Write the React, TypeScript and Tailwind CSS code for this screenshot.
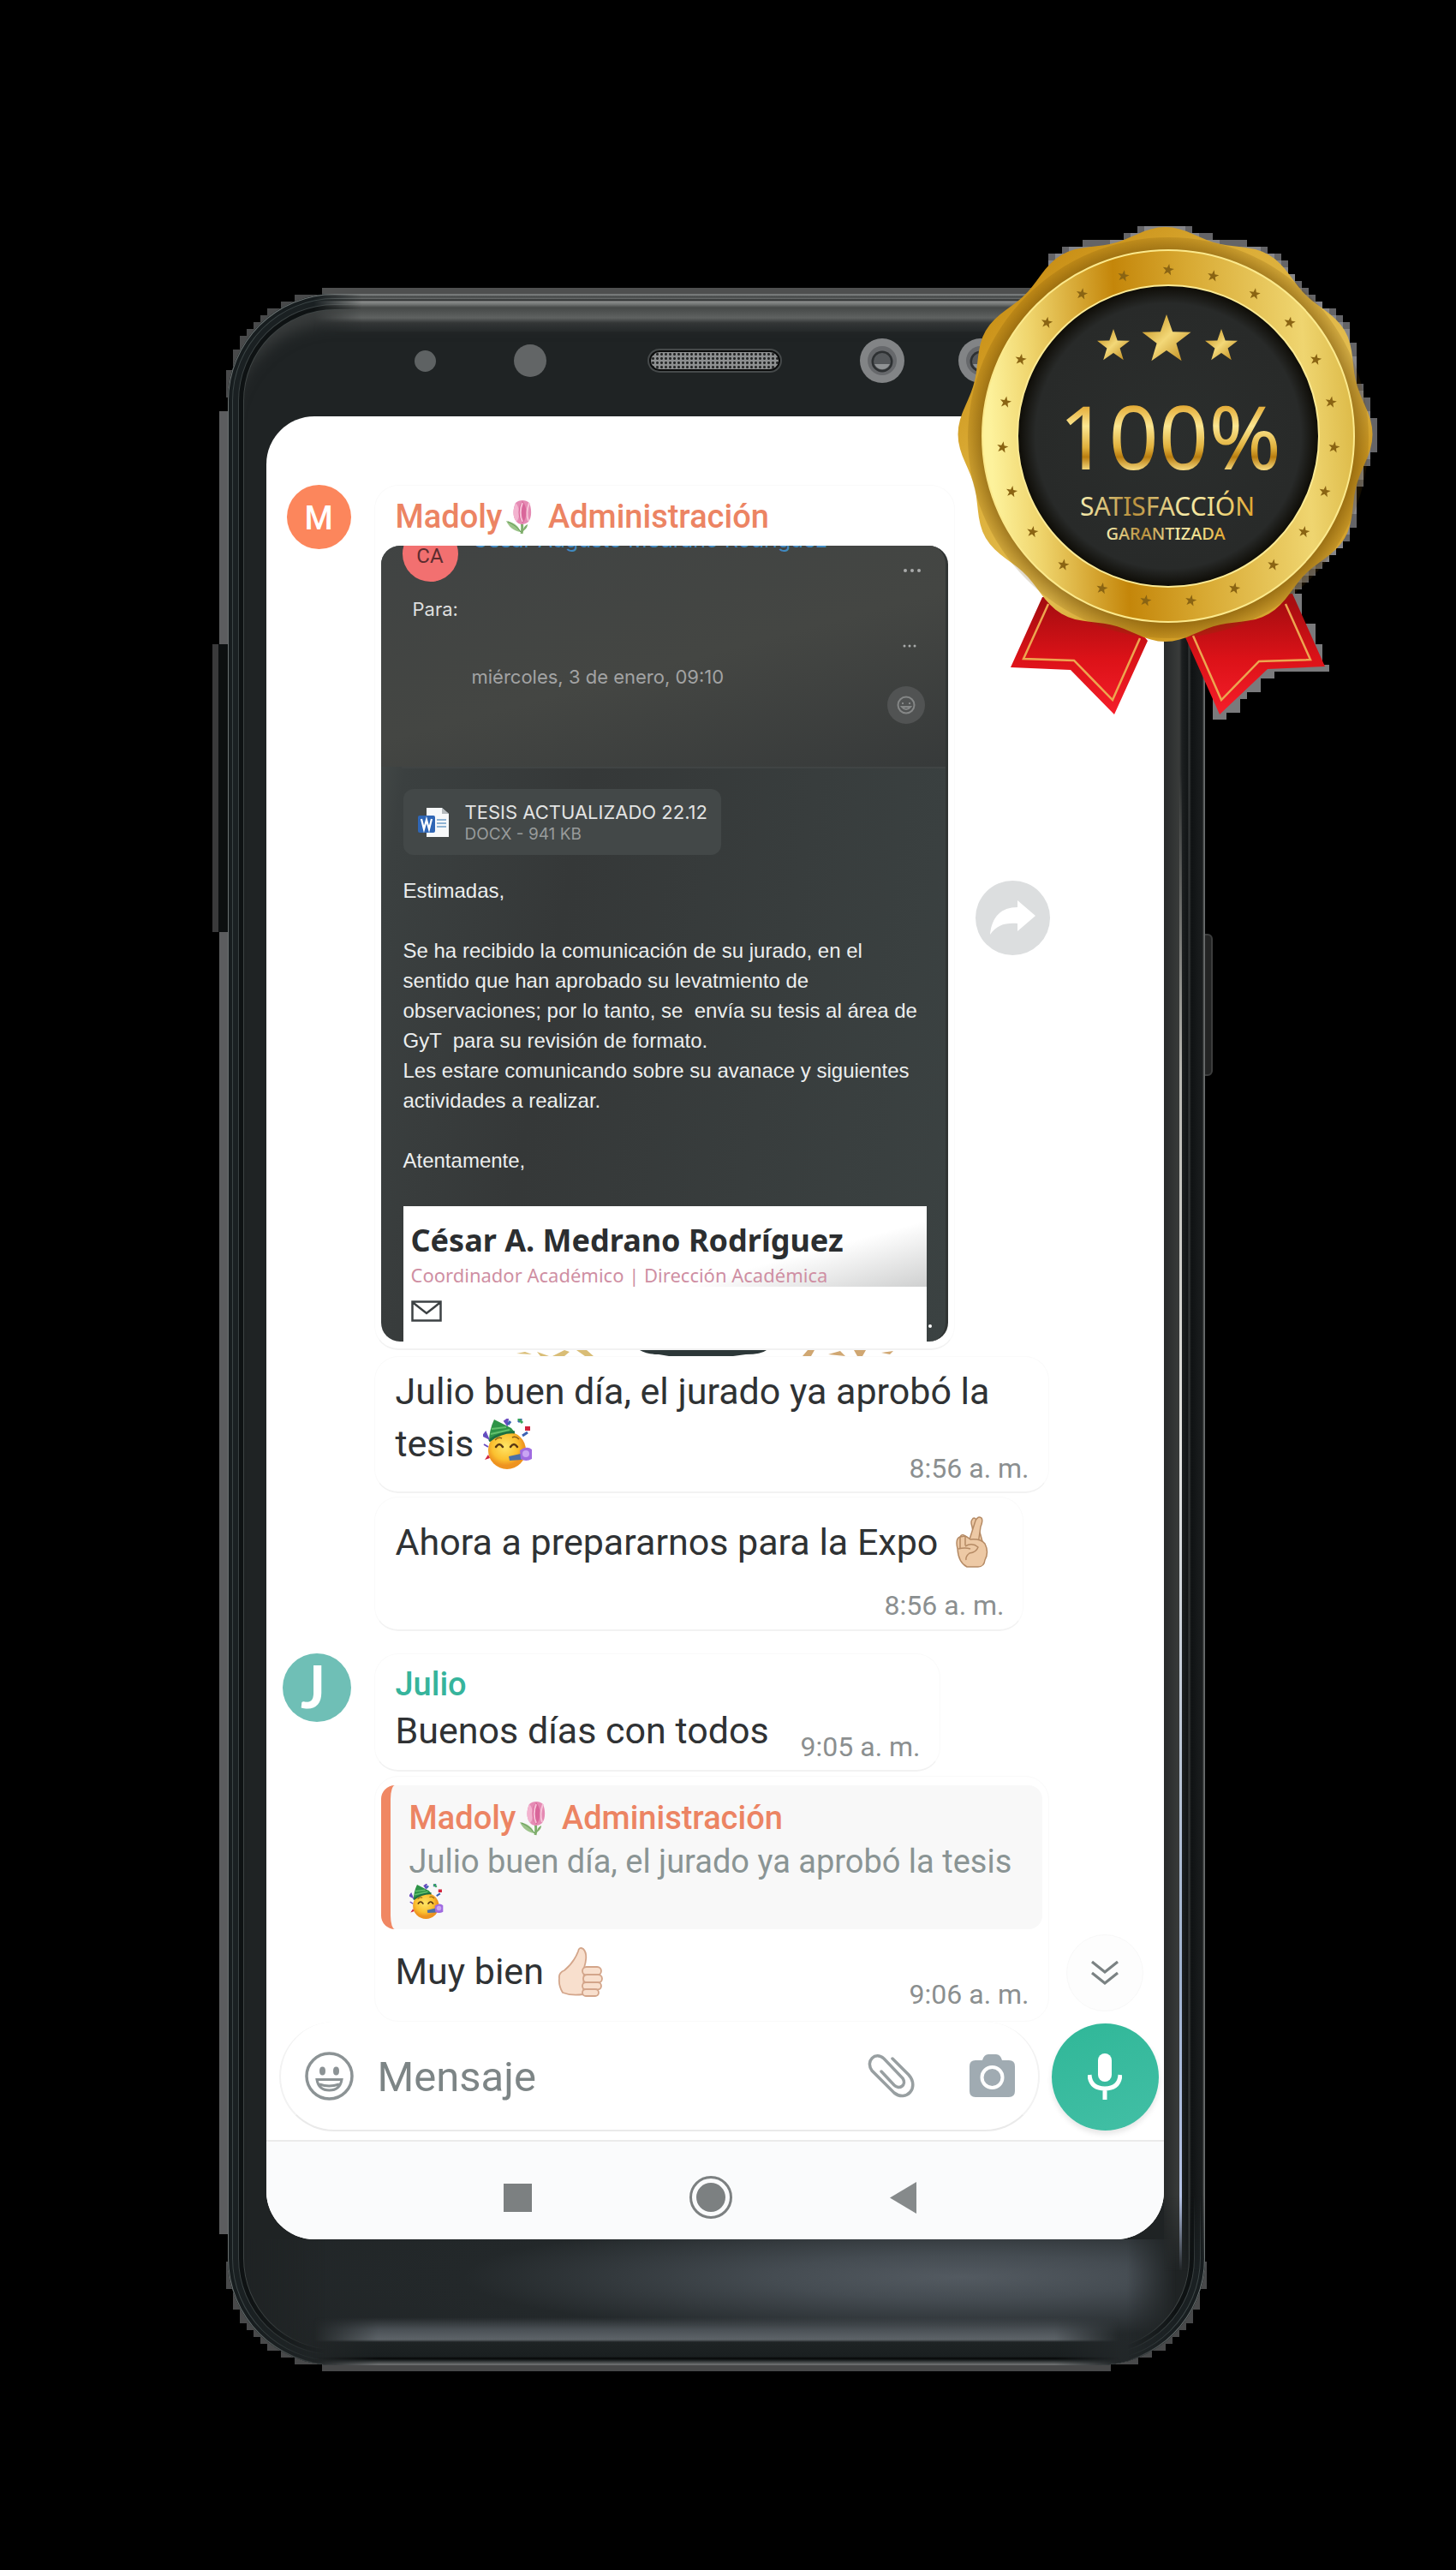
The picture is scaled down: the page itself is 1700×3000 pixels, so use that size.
import React from "react";

const starPoints = (cx: number, cy: number, r: number, rot = 0) =>
  Array.from({ length: 10 }, (_, i) => {
    const a = ((i * 36 - 90 + rot) * Math.PI) / 180;
    const q = i % 2 ? r * 0.4 : r;
    return `${(cx + q * Math.cos(a)).toFixed(1)},${(cy + q * Math.sin(a)).toFixed(1)}`;
  }).join(" ");

const SEAL = { x: 1360.5, y: 507 };

const sealPath =
  "M" +
  Array.from({ length: 180 }, (_, i) => {
    const a = (i * 2 * Math.PI) / 180;
    const r = 236.5 + 5.5 * Math.cos(12 * a);
    return `${(SEAL.x + r * Math.cos(a)).toFixed(1)} ${(SEAL.y + r * Math.sin(a)).toFixed(1)}`;
  }).join("L") +
  "Z";

/* 8px blocks that peek out along the right edge of the seal */
const sealBlocks: { x: number; y: number; o: number }[] = [];
for (let y = 264; y < 720; y += 8) {
  for (let x = 1224; x < 1616; x += 8) {
    const dx = x + 4 - SEAL.x;
    const dy = y + 4 - SEAL.y;
    const d = Math.hypot(dx, dy);
    const a = Math.atan2(dy, dx);
    const edge = 236.5 + 5.5 * Math.cos(12 * a);
    if (d > edge - 10 && d < edge + 5) sealBlocks.push({ x, y, o: d > edge + 1 ? 0.75 : 1 });
  }
}

function Seal() {
  return (
    <svg
      className="pointer-events-none absolute -top-[88px] -right-[213px] h-[590px] w-[510px]"
      viewBox="1110 255 510 590"
      role="img"
      aria-label="100% satisfacción garantizada"
    >
      <defs>
        <linearGradient id="outer" gradientUnits="userSpaceOnUse" x1="1200" y1="300" x2="1530" y2="710">
          <stop offset="0" stopColor="#c78c12" />
          <stop offset=".3" stopColor="#dcae38" />
          <stop offset=".62" stopColor="#e3bd50" />
          <stop offset=".82" stopColor="#cf9a22" />
          <stop offset="1" stopColor="#d9aa36" />
        </linearGradient>
        <linearGradient id="ring" x1="0" x2="1" y1=".05" y2="0">
          <stop offset="0" stopColor="#fdf29c" />
          <stop offset=".12" stopColor="#efd46c" />
          <stop offset=".35" stopColor="#c4860a" />
          <stop offset=".55" stopColor="#d8a932" />
          <stop offset=".85" stopColor="#efd570" />
          <stop offset="1" stopColor="#dab642" />
        </linearGradient>
        <radialGradient id="face">
          <stop offset="0" stopColor="#2b2e2d" />
          <stop offset=".88" stopColor="#282a29" />
          <stop offset="1" stopColor="#0d0b05" />
        </radialGradient>
        <radialGradient id="ringShade" gradientUnits="userSpaceOnUse" cx="1364" cy="511" r="242">
          <stop offset=".88" stopColor="#6a4500" stopOpacity=".6" />
          <stop offset="1" stopColor="#6a4500" stopOpacity="0" />
        </radialGradient>
        <linearGradient id="goldDown" x1="0" x2="0" y1="0" y2="1">
          <stop offset=".2" stopColor="#dc9a1c" />
          <stop offset=".42" stopColor="#fbe691" />
          <stop offset=".6" stopColor="#e0b03c" />
          <stop offset=".68" stopColor="#b97d10" />
          <stop offset=".8" stopColor="#fbe28a" />
        </linearGradient>
        <linearGradient id="goldAcross">
          <stop offset="0" stopColor="#f7efb0" />
          <stop offset=".3" stopColor="#b98f3a" />
          <stop offset=".6" stopColor="#f5eba8" />
          <stop offset=".8" stopColor="#f0dc86" />
          <stop offset="1" stopColor="#e2a52a" />
        </linearGradient>
        <linearGradient id="goldStar" x2="1" y2="1">
          <stop offset=".1" stopColor="#c79422" />
          <stop offset=".5" stopColor="#f3d878" />
          <stop offset="1" stopColor="#b98212" />
        </linearGradient>
        <linearGradient id="red" gradientUnits="userSpaceOnUse" x1="1360" y1="705" x2="1360" y2="834">
          <stop offset="0" stopColor="#a80d10" />
          <stop offset=".5" stopColor="#dc1218" />
          <stop offset="1" stopColor="#f51e2a" />
        </linearGradient>
      </defs>
      {sealBlocks.map((b) => (
        <rect key={`${b.x}-${b.y}`} x={b.x} y={b.y} width="8" height="8" fill="#86868a" opacity={b.x < 1340 && b.y > 336 ? 0 : b.o} />
      ))}
      <path d="M1509 693H1520V728H1536V752H1544V776H1552V784H1488V792H1472V808H1456V816H1448V832H1432V840H1416V816Z" fill="#7a7a7c" />
      <path d="M1217 697L1180 779L1250 782L1301 834L1340 748L1300 700Z" fill="url(#red)" />
      <path d="M1224 705L1195 769L1254 771L1299 817L1331 745" fill="none" stroke="#eda550" strokeWidth="2.5" />
      <path d="M1509 693L1547 778L1480 781L1424 834L1384 744L1420 700Z" fill="url(#red)" />
      <path d="M1501 705L1530 770L1470 772L1426 817L1393 742" fill="none" stroke="#eda550" strokeWidth="2.5" />
      <path d={sealPath} fill="url(#outer)" />
      <circle cx="1364" cy="511" r="234" fill="url(#ringShade)" />
      <circle cx="1364" cy="509" r="217" fill="url(#ring)" stroke="#fbe98c" strokeWidth="2" />
      <circle cx="1364" cy="509" r="176" fill="url(#face)" stroke="#fbea94" strokeWidth="2" />
      {Array.from({ length: 23 }, (_, i) => {
        const a = (i * 2 * Math.PI) / 23;
        return (
          <polygon
            key={i}
            points={starPoints(1364 + 194 * Math.sin(a), 509 - 194 * Math.cos(a), 7, 10)}
            fill="#8a6413"
          />
        );
      })}
      <polygon points={starPoints(1300, 404, 20)} fill="url(#goldStar)" />
      <polygon points={starPoints(1362, 397, 30)} fill="url(#goldStar)" />
      <polygon points={starPoints(1426, 404, 20)} fill="url(#goldStar)" />
      <g textAnchor="middle" fontFamily="'Noto Sans', sans-serif">
        <text x="1366" y="548" fontSize="102" fill="url(#goldDown)">100%</text>
        <text x="1363" y="602" fontSize="30" fill="url(#goldAcross)">SATISFACCIÓN</text>
        <text x="1361" y="630" fontSize="20" fontWeight="500" fill="url(#goldAcross)">GARANTIZADA</text>
      </g>
    </svg>
  );
}

/* stepped outline behind a rounded corner of the handset */
function StepCorner({ className }: { className: string }) {
  const cells: React.ReactNode[] = [];
  for (let y = 0; y < 128; y += 8) {
    for (let x = 0; x < 128; x += 8) {
      if (Math.hypot(127 - (x + 8), 132 - (y + 8)) < 124) {
        cells.push(<rect key={`${x}-${y}`} x={x} y={y} width="8" height="8" />);
      }
    }
  }
  return (
    <svg className={`absolute size-32 fill-[#48494a] ${className}`} viewBox="0 0 128 128" aria-hidden="true">
      {cells}
    </svg>
  );
}

function Tulip() {
  return (
    <svg className="mr-2 ml-1 inline-block h-10 w-8 align-[-8px]" viewBox="0 0 32 40" role="img" aria-label="🌷">
      <path d="M19 24C20 30 20 35 19 39" fill="none" stroke="#7fae6c" strokeWidth="3" />
      <path d="M1 24C7 25 15 28 18 37C10 36 4 31 1 24Z" fill="#9cc389" />
      <path d="M3 25C9 28 14 31 18 37" fill="none" stroke="#5f9a52" />
      <path d="M22 35C25 33 26 30 26 28C23 29 21 32 20 37Z" fill="#7fae6c" />
      <path d="M12 3C16 -1 24 -1 28 3C31 10 31 20 27 25C23 29 16 29 13 25C8 19 9 9 12 3Z" fill="#e58bb4" />
      <path d="M12 3C9 11 8 19 13 25C17 21 18 9 12 3Z" fill="#f3b3cf" />
      <path d="M20 1C14 8 14 20 20 27C26 20 26 8 20 1Z" fill="#d9669a" />
      <path d="M20 3C17 10 17 19 20 25" fill="none" stroke="#f5bfd6" strokeWidth="2" />
      <path d="M28 3C25 11 25 19 27 24" fill="none" stroke="#f6c3d8" strokeWidth="2" />
    </svg>
  );
}

function PartyFace({ className }: { className: string }) {
  return (
    <svg className={`inline-block ${className}`} viewBox="0 0 58 60" role="img" aria-label="🥳">
      <defs>
        <radialGradient id="skin" cx=".45" cy=".4">
          <stop offset="0" stopColor="#ffe667" />
          <stop offset=".7" stopColor="#fbc02f" />
          <stop offset="1" stopColor="#ee9320" />
        </radialGradient>
      </defs>
      <circle cx="28" cy="37" r="22" fill="url(#skin)" />
      <path d="M7 27C12 21 26 14 37 16L33 11L13 1C9 9 7 18 7 27Z" fill="#2e9447" />
      <path d="M7 26C14 20 26 15 37 16" fill="none" stroke="#1d6f42" strokeWidth="3" />
      <path d="M10 12L27 10M9 18L31 13" stroke="#63c06d" strokeWidth="2" />
      <path d="M15 33Q19 27 23 33M32 33Q36 27 40 33" fill="none" stroke="#5b3913" strokeWidth="2.5" strokeLinecap="round" />
      <path d="M14 25Q18 21 22 23M34 22Q38 20 42 24" fill="none" stroke="#8b5e17" strokeWidth="1.5" />
      <path d="M30 44L44 41L45 48L31 49Z" fill="#4b6fa6" />
      <path d="M43 37Q51 31 57 36V47Q50 51 44 47Z" fill="#a06be0" />
      <circle cx="50" cy="41" r="4" fill="#c9a5f3" />
      <path d="M25 3L29 0L28 7ZM3 16L0 20L6 23ZM1 30L6 33" fill="#3a66b8" stroke="#6b4cc0" strokeWidth="2" />
      <path d="M49 9H55V14H49ZM2 48L8 46L6 42Z" fill="#d2233c" />
      <path d="M46 20L52 16M41 4L45 0M29 7L32 3" stroke="#3d63b4" strokeWidth="3" />
      <path d="M41 0L46 5" stroke="#37a35b" strokeWidth="3" />
    </svg>
  );
}

function CrossedFingers() {
  return (
    <svg className="ml-5 inline-block h-[60px] w-10 align-[-15px]" viewBox="0 0 40 60" role="img" aria-label="🤞🏼">
      <g fill="#edc9a5" stroke="#b58a64" strokeWidth="1.5" strokeLinejoin="round">
        <path d="M33 33L25 4Q22 0 20 4Q18 6 20 12L24 34Z" />
        <path d="M16 30L24 5Q27 -1 31 2Q33 5 30 12L27 32Z" />
        <path d="M3 38Q0 26 6 24L12 23Q16 25 18 27Q30 26 35 32Q40 42 35 51Q34 59 27 59H14Q4 54 3 38Z" />
        <path d="M6 24Q8 20 12 23V34M6 24V37" fill="none" />
        <path d="M12 35Q20 30 27 36Q25 42 17 43Q12 47 13 51M4 38Q12 36 18 38" fill="none" />
      </g>
    </svg>
  );
}

function ThumbsUp() {
  return (
    <svg className="ml-4 inline-block h-[58px] w-[53px] align-[-15px]" viewBox="0 0 53 58" role="img" aria-label="👍🏻">
      <g fill="#f8dfcd" stroke="#d3a58a" strokeWidth="1.8" strokeLinejoin="round">
        <path d="M2 36Q1 30 8 27Q19 18 24 5Q25 -1 30 2Q36 8 31 24L30 55Q16 57 6 53Q1 45 2 36Z" />
        <rect x="29" y="23" width="22" height="9.500" rx="4.700" />
        <rect x="30" y="32" width="22" height="9.500" rx="4.700" />
        <rect x="29" y="41" width="22" height="8.500" rx="4.200" />
        <rect x="29" y="49" width="19" height="8" rx="4" />
      </g>
    </svg>
  );
}

function Time({ children }: { children: string }) {
  return <time className="block text-[32px] leading-10 whitespace-nowrap text-[#8b8f90]">{children}</time>;
}

const bubble = "rounded-[28px] border border-b-2 border-[#fafafa] border-b-[#f2f2f2] bg-white";
const message = "text-[43px] leading-[61px] text-[#2f3234]";

function Dots({ className }: { className: string }) {
  return (
    <span className={`flex ${className}`} aria-hidden="true">
      <i className="size-1 rounded-full bg-[#a9abab]" />
      <i className="size-1 rounded-full bg-[#a9abab]" />
      <i className="size-1 rounded-full bg-[#a9abab]" />
    </span>
  );
}

function MailShot() {
  return (
    <section className="relative mr-[7px] ml-[7px] overflow-hidden rounded-[22px] border-r-[3px] border-[#303433] bg-[linear-gradient(100deg,#4c524f_0%,#3b4040_9%,#353838_35%,#3b4242_100%)]">
      <div className="bg-[linear-gradient(165deg,#404343_0%,#444643_55%,#373a3a_100%)]">
        <div className="-mt-[23px] flex items-start pr-[29px] pl-[25px]">
          <div className="flex size-[65px] shrink-0 items-center justify-center rounded-full bg-[#f27070] pt-1 text-2xl text-[#5d2c2f]">CA</div>
          <p className="ml-[17px] flex-1 font-['Inter',sans-serif] text-[25px] leading-8 whitespace-nowrap text-[#4089c0]">
            César Augusto Medrano Rodríguez
          </p>
          <Dots className="mt-[50px] gap-1" />
        </div>
        <p className="mt-[18px] pl-[37px] font-['Inter',sans-serif] text-[22px] leading-7 text-[#dedfdf]">Para:</p>
        <div className="mt-[27px] flex justify-end pr-8"><Dots className="scale-75 gap-1" /></div>
        <div className="mt-[20px] flex h-[69px] items-start justify-between pr-6 pl-[106px]">
          <p className="font-['Inter',sans-serif] text-[22px] leading-7 text-[#a2a3a3]">miércoles, 3 de enero, 09:10</p>
          <button className="flex size-11 items-center justify-center self-end rounded-full bg-[#515353]" aria-label="Reaccionar">
            <svg className="size-[22px] fill-none stroke-[#858787]" viewBox="0 0 22 22" strokeWidth="2">
              <circle cx="11" cy="11" r="9.500" />
              <path d="M7 8V10M15 8V10M6 13Q11 19 16 13Z" />
            </svg>
          </button>
        </div>
        <div className="h-[50px]" />
      </div>
      <hr className="ml-6 border-t-2 border-[#404444]" />
      <div className="mt-6 ml-[26px] flex h-[77px] w-fit items-center rounded-xl bg-[#434848] pr-4 pl-[17px]">
        <svg className="h-9 w-9" viewBox="0 0 36 36" aria-hidden="true">
          <path d="M10 1H28L36 8V35H10Z" fill="#f7f9fa" />
          <path d="M28 1V8H36Z" fill="#b4babd" />
          <path d="M22 15H33M22 19H33M22 23H33" stroke="#8fb4d4" strokeWidth="2" />
          <rect x="0" y="10" width="20" height="20" rx="2" fill="#2f66b5" />
          <path d="M4 14L7 26L10 15L13 26L16 14" fill="none" stroke="#fff" strokeWidth="2.200" />
        </svg>
        <div className="ml-[19px] font-['Inter',sans-serif]">
          <p className="text-[22px] leading-7 text-[#e2e3e3]">TESIS ACTUALIZADO 22.12</p>
          <p className="text-[19px] leading-6 text-[#989b9b]">DOCX - 941 KB</p>
        </div>
      </div>
      <div className="mt-6 ml-[26px] font-['Liberation_Sans',Arial,sans-serif] text-[24px] leading-[35px] whitespace-pre text-[#eceeee]">
        <p>Estimadas,</p>
        <p className="mt-[35px]">Se ha recibido la comunicación de su jurado, en el</p>
        <p>sentido que han aprobado su levatmiento de</p>
        <p>observaciones; por lo tanto, se  envía su tesis al área de</p>
        <p>GyT  para su revisión de formato.</p>
        <p>Les estare comunicando sobre su avanace y siguientes</p>
        <p>actividades a realizar.</p>
        <p className="mt-[35px]">Atentamente,</p>
      </div>
      <div className="mt-9 mr-[22px] ml-[26px] bg-white">
        <div className="bg-[linear-gradient(345deg,#cfd0d0_0%,#ffffff_30%)] pt-[18px] pb-0 pl-[9px] font-['Noto_Sans',sans-serif]">
          <p className="text-[36px] leading-11 font-bold whitespace-nowrap text-[#2b2e30]">César A. Medrano Rodríguez</p>
          <p className="mt-1 text-[22px] leading-7 whitespace-nowrap text-[#cf8fa3]">Coordinador Académico | Dirección Académica</p>
        </div>
        <div className="h-16 pt-4 pl-[9px]">
          <svg className="h-[25px] w-9 fill-none stroke-[#3d4244]" viewBox="0 0 36 25" strokeWidth="2.500">
            <path d="M1.500 1.500H34.500V23.500H1.500ZM1.500 2L18 15L34.500 2" />
          </svg>
        </div>
      </div>
      <i className="absolute right-4 bottom-4 size-1 rounded-full bg-white" />
    </section>
  );
}

function Conversation() {
  return (
    <main className="flex flex-col items-start pt-20">
      <div className="flex w-full items-center">
        <div className="flex w-[126px] shrink-0 self-start pl-6">
          <div className="flex size-[75px] items-center justify-center rounded-full bg-[#fc865c] pt-1 text-[38px] font-medium text-white">M</div>
        </div>
        <article className={`w-[678px] pt-[14px] pb-2 ${bubble}`}>
          <h2 className="mb-3 pl-6 text-[38px] leading-11 font-medium whitespace-nowrap text-[#ec8463]">
            Madoly<Tulip /> Administración
          </h2>
          <MailShot />
        </article>
        <button className="ml-6 flex size-[87px] shrink-0 items-center justify-center rounded-full bg-[#dcdedf]" aria-label="Reenviar">
          <svg className="h-10 w-[54px] fill-white" viewBox="0 0 54 40">
            <path d="M1 40C3 19 14 8 33 8V0L54 18L33 36V27C18 26 9 29 1 40Z" />
          </svg>
        </button>
      </div>

      <svg className="ml-[290px] h-[7px] w-[460px]" viewBox="0 0 460 7" aria-hidden="true">
        <path d="M146 0H294Q288 5 270 5L255 7H180L168 5Q154 5 146 0Z" fill="#2c3738" />
        <path d="M2 4L12 2L20 5ZM26 2L40 7H30ZM44 7L58 0L64 2L58 7ZM72 0H84L92 7H82Z" fill="#d9bd76" />
        <path d="M336 7L342 0H350L346 7ZM366 5L380 1L386 7ZM396 0H410L406 7H400ZM428 3L442 1L438 5Z" fill="#d0a772" />
      </svg>

      <article className={`ml-[126px] w-[788px] pt-[10px] pr-[22px] pb-[7px] pl-6 ${bubble}`}>
        <p className={message}>
          Julio buen día, el jurado ya aprobó la<br />
          tesis <PartyFace className="h-[60px] w-[58px] align-[-16px]" />
        </p>
        <div className="-mt-[22px] flex justify-end"><Time>8:56 a. m.</Time></div>
      </article>

      <article className={`mt-1 ml-[126px] w-[758px] pt-[22px] pr-[21px] pb-[8px] pl-6 ${bubble}`}>
        <p className={`whitespace-nowrap ${message}`}>
          Ahora a prepararnos para la Expo<CrossedFingers />
        </p>
        <div className="mt-[23px] flex justify-end"><Time>8:56 a. m.</Time></div>
      </article>

      <div className="mt-[26px] flex">
        <div className="w-[126px] shrink-0 pl-[19px]">
          <div className="flex size-20 items-center justify-center rounded-full bg-[#6fbfb6] pr-2 pb-1 font-['Lato',sans-serif] text-[68px] leading-none font-bold text-white">J</div>
        </div>
        <article className={`w-[661px] pt-[13px] pr-[22px] pb-[7px] pl-6 ${bubble}`}>
          <h2 className="text-[38px] leading-11 font-medium text-[#36b49c]">Julio</h2>
          <div className="mt-0.5 flex items-end justify-between">
            <p className={`pb-2 ${message}`}>Buenos días con todos</p>
            <Time>9:05 a. m.</Time>
          </div>
        </article>
      </div>

      <article className="mt-[5px] ml-[126px] w-[788px] rounded-[28px] border border-[#fafafa] pt-[10px] pb-[11px]">
        <blockquote className="mx-[7px] overflow-hidden rounded-[16px] border-l-[11px] border-[#f08763] bg-[#f8f8f8] pt-4 pb-1 pl-[22px]">
          <h3 className="text-[38px] leading-11 font-medium text-[#ec8463]">
            Madoly<Tulip /> Administración
          </h3>
          <p className="mt-1 text-[38px] leading-[50px] whitespace-nowrap text-[#8a9494]">
            Julio buen día, el jurado ya aprobó la tesis<br />
            <PartyFace className="h-[42px] w-10 align-[-5px]" />
          </p>
        </blockquote>
        <div className="flex items-end justify-between pt-[19px] pr-[22px] pl-6">
          <p className={`pb-4 ${message}`}>
            Muy bien<ThumbsUp />
          </p>
          <Time>9:06 a. m.</Time>
        </div>
      </article>
    </main>
  );
}

function Composer() {
  return (
    <form className="relative flex items-center gap-[14px] pr-[6px] pb-[10px] pl-[15px]" onSubmit={(e) => e.preventDefault()}>
      <button type="button" aria-label="Ir al final" className="absolute -top-[102px] right-6 flex size-[90px] items-center justify-center rounded-full border border-[#f8f8f8] bg-[#fdfdfd]">
        <svg className="h-[30px] w-8 fill-none stroke-[#7b8283]" viewBox="0 0 32 30" strokeWidth="3.200">
          <path d="M1 2L16 14L31 2M1 15L16 27L31 15" />
        </svg>
      </button>
      <div className="flex h-32 min-w-0 flex-1 items-center rounded-full border-2 border-t-0 border-[#f2f2f2] border-b-[#eaeaea] bg-white pr-[27px] pl-[28px]">
        <button type="button" aria-label="Emojis">
          <svg className="size-[57px] fill-none stroke-[#8c9395]" viewBox="0 0 57 57" strokeWidth="3.500">
            <circle cx="28.500" cy="28.500" r="26.500" />
            <ellipse cx="20.500" cy="22.500" rx="2.500" ry="4" fill="#8c9395" strokeWidth="2" />
            <ellipse cx="36.500" cy="22.500" rx="2.500" ry="4" fill="#8c9395" strokeWidth="2" />
            <path d="M14 32.500H43Q41 45 28.500 45Q16 45 14 32.500ZM17 38Q28 42 40 38" strokeWidth="3" />
          </svg>
        </button>
        <input aria-label="Mensaje" placeholder="Mensaje" className="ml-[28px] h-16 min-w-0 flex-1 bg-transparent pt-1 text-[49px] text-[#7d8586] outline-none placeholder:text-[#7d8586]" />
        <button type="button" aria-label="Adjuntar">
          <svg className="h-[51px] w-[55px] fill-none stroke-[#989fa1]" viewBox="0 0 55 51" strokeWidth="3.500" strokeLinecap="round">
            <path d="M29 5L48 24C61 39 45 56 31 45L5 19C-3 8 9 -4 19 5L41 28C46 36 37 42 31 36L16 20" />
          </svg>
        </button>
        <button type="button" aria-label="Cámara" className="ml-16">
          <svg className="h-[51px] w-[53px]" viewBox="0 0 53 51">
            <path d="M7 7H15Q17 0 22 0H31Q36 0 38 7H46Q53 7 53 14V43Q53 50 46 50H7Q0 50 0 43V14Q0 7 7 7Z" fill="#a0abb2" />
            <circle cx="26.500" cy="27" r="12" fill="none" stroke="#fff" strokeWidth="4" />
          </svg>
        </button>
      </div>
      <button type="button" aria-label="Grabar audio" className="flex size-[125px] shrink-0 items-center justify-center rounded-full bg-[linear-gradient(160deg,#30b798,#42bfa5)] shadow-[0_4px_6px_#0000001a]">
        <svg className="h-14 w-10" viewBox="0 0 40 56">
          <rect x="12" y="1" width="16" height="33" rx="8" fill="#fff" />
          <path d="M2 26Q3 42 20 42Q37 42 38 26M20 42V55" fill="none" stroke="#fff" strokeWidth="5" />
        </svg>
      </button>
    </form>
  );
}

function SystemNav() {
  return (
    <nav className="flex h-[116px] items-center justify-center gap-[184px] border-t-2 border-[#ebebeb] bg-[#fafbfc] pt-4 pr-3">
      <button aria-label="Recientes" className="size-[33px] bg-[#7c8081]" />
      <button aria-label="Inicio" className="size-[50px] rounded-full border-[3px] border-[#7c8081] p-[5px]">
        <span className="block size-full rounded-full bg-[#7c8081]" />
      </button>
      <button aria-label="Atrás">
        <svg className="h-[37px] w-[31px] fill-[#868a8b]" viewBox="0 0 31 37"><path d="M0 18.500L31 0V37Z" /></svg>
      </button>
    </nav>
  );
}

function Lens({ className }: { className: string }) {
  return (
    <svg className={`size-[52px] ${className}`} viewBox="0 0 52 52" aria-hidden="true">
      <circle cx="26" cy="26" r="26" fill="#828486" />
      <circle cx="26" cy="26" r="17" fill="#66686b" />
      <circle cx="26" cy="27" r="12.500" fill="#2d3032" />
      <circle cx="26" cy="27" r="10" fill="#55585b" />
      <path d="M17 30H35Q32 36 26 36Q20 36 17 30Z" fill="#8f9294" />
    </svg>
  );
}

export default function App() {
  return (
    <div className="flex min-h-screen justify-center bg-black pt-[343px] pr-7 pb-[239px] font-['Roboto',sans-serif]">
      <div className="relative h-fit w-full max-w-[1141px]">
        <StepCorner className="-top-[7px] -left-0.5" />
        <StepCorner className="-top-[7px] -right-0.5 -scale-x-100" />
        <StepCorner className="-bottom-[7px] -left-0.5 -scale-y-100" />
        <StepCorner className="-right-0.5 -bottom-[7px] -scale-100" />
        <div className="absolute -top-[7px] right-[110px] left-[110px] h-4 bg-[#4e4f4f]" />
        <div className="absolute right-[110px] -bottom-[7px] left-[110px] h-4 bg-[#474849]" />
        <div className="absolute top-[137px] bottom-[153px] -left-[10px] w-5 bg-[#5c5d5f]" />
        <div className="absolute top-[409px] -left-[18px] h-[336px] w-5 border-l-[7px] border-[#3a3a3b] bg-[#0c0f10]" />
        <div className="absolute top-[747px] -right-[9px] h-[166px] w-4 rounded-md border-2 border-[#3c3d3d] bg-[#232424]" />

        <div className="relative overflow-hidden rounded-[125px] bg-[#1f2324] pr-12 pl-[45px] shadow-[inset_0_0_0_1px_#6b7272,inset_0_0_0_5px_#171d1f,inset_0_0_0_6px_#3c4546,inset_0_0_0_12px_#1a2022,inset_0_0_0_13px_#3a4142,inset_0_0_0_18px_#0e1213,inset_0_0_0_19px_#3e4444,inset_0_34px_18px_0_#3a3d3d]">
          <div className="absolute top-0 right-[100px] left-[100px] h-11 bg-[linear-gradient(#767979_0px,#767979_2px,#3d4040_3px,#6b6e6e_6px,#151818_7px,#8b8d8c_9px,#747776_12px,#454847_16px,#565958_24px,#5f6261_28px,#333636_34px,#25292a_44px)] mask-[linear-gradient(90deg,transparent,#000_6%,#000_94%,transparent)]" />
          <div className="absolute right-0 bottom-0 left-0 h-[147px] bg-[radial-gradient(ellipse_at_75%_30%,#535a61_0%,#454c52_18%,#23282a_48%,#202425_100%)] mask-[linear-gradient(90deg,transparent_2%,#000_10%,#000_92%,transparent_97%)]" />
          <div className="absolute right-[100px] bottom-0 left-[100px] h-14 bg-[linear-gradient(#2d323500_0px,#4a5055_14px,#5d6368_26px,#1e2324_29px,#1a1f20_46px,#050606_48px,#1b2021_50px,#6b6e6f_55px)] mask-[linear-gradient(90deg,transparent,#000_8%,#000_92%,transparent)]" />
          <div className="absolute top-[80px] right-0 bottom-[110px] w-12 bg-[linear-gradient(90deg,#272a2a_0px,#393b3a_18px,#1c1f20_21px,#121516_28px,#3a3d3d_29px,#0f1213_32px,#1b1e1f_45px,#6b6e6e_47px)] mask-[linear-gradient(transparent,#000_4%,#000_96%,transparent)]" />
          <div className="absolute top-[560px] right-[27px] bottom-[110px] w-[3px] bg-[linear-gradient(transparent,#b9b8b2_20%,#e3e3e0_45%,#9fb2d0_80%,#b4c2e6_95%,transparent)]" />

          <header className="relative flex h-[143px] items-center pt-[13px] pl-[173px]">
            <i className="size-[25px] shrink-0 rounded-full bg-[#5e6263]" />
            <i className="ml-[91px] size-[38px] shrink-0 rounded-full bg-[#626566]" />
            <div className="ml-[120px] h-6 w-[153px] shrink-0 rounded-full border-2 border-[#0b0c0c] bg-[#8d8f90] bg-[radial-gradient(circle,#242626_1px,transparent_2px)] bg-size-[5px_5px] shadow-[0_0_0_2px_#45494a]" />
            <Lens className="ml-[93px] shrink-0" />
            <Lens className="ml-[63px] shrink-0" />
          </header>
          <div className="relative overflow-hidden rounded-[56px] bg-white">
            <Conversation />
            <Composer />
            <SystemNav />
          </div>
          <div className="h-[147px]" />
        </div>
        <Seal />
      </div>
    </div>
  );
}
